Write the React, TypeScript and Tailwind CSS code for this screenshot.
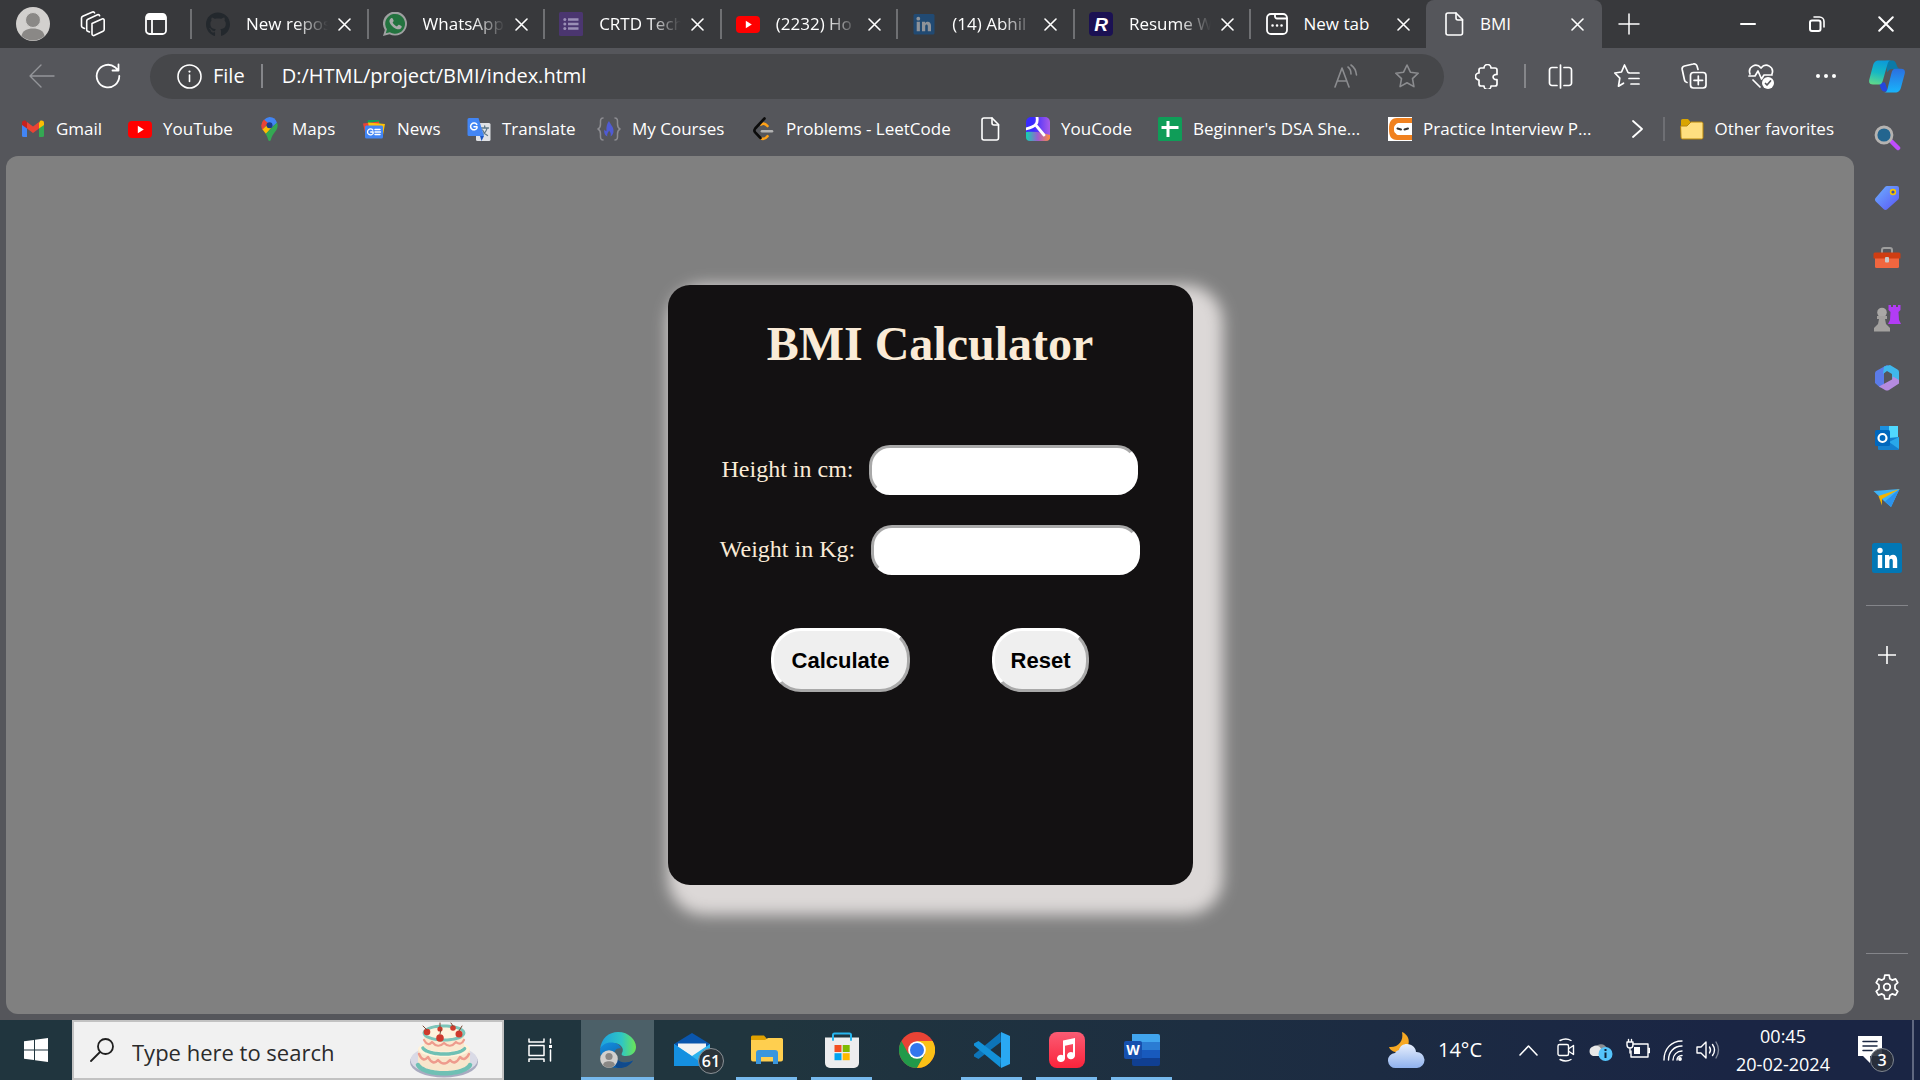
import React from "react";
import { FaGithub } from "react-icons/fa";

type Kids = { children?: React.ReactNode };
type SvgProps = Kids & { size?: number; w?: number; h?: number; box?: string; line?: boolean; sw?: number };

function Svg({ size = 24, w, h, box = "0 0 24 24", line, sw = 1.4, children }: SvgProps) {
  return (
    <svg
      width={w ?? size}
      height={h ?? size}
      viewBox={box}
      fill={line ? "none" : "currentColor"}
      stroke={line ? "currentColor" : "none"}
      strokeWidth={line ? sw : undefined}
      strokeLinecap="round"
      strokeLinejoin="round"
      className="shrink-0"
      aria-hidden="true"
    >
      {children}
    </svg>
  );
}

/* ---------- small icons ---------- */

const Cross = ({ size = 13 }: { size?: number }) => (
  <Svg size={size} box="0 0 13 13" line sw={1.6}>
    <path d="M1 1l11 11M12 1L1 12" />
  </Svg>
);

const PageIcon = () => (
  <Svg w={20} h={24} box="0 0 20 24" line sw={1.6}>
    <path d="M4 1h8l6.500 6.500V21a2 2 0 0 1-2 2H4a2 2 0 0 1-2-2V3a2 2 0 0 1 2-2z" />
    <path d="M12 1v5a2 2 0 0 0 2 2h4.500" />
  </Svg>
);

const YouTube = () => (
  <Svg>
    <rect x="0" y="4" width="24" height="17" rx="4" fill="#f00" />
    <path d="M9.800 8.800v7.400l6-3.700z" fill="#fff" />
  </Svg>
);

const WhatsApp = () => (
  <Svg>
    <path d="M0 24l1.800-6A12 12 0 1 1 6.500 22.300z" fill="#9fa0a1" />
    <path d="M2.800 21.200l1.100-3.900a9.900 9.900 0 1 1 3 2.900z" fill="#23733f" />
    <path d="M8 6.200c.7-.5 1.400-.3 1.700.4l.9 2c.2.500 0 .9-1 2 .9 1.800 2.400 3.100 4.300 3.800l1.400-1.500c.2-.2.600-.2.900-.1l2.200 1.100c.5.3.4 1-.1 2-1 1.600-3.200 1.800-5.500.8-3-1.300-5.500-4-6.300-6.700C6.200 8.400 6.900 7 8 6.200z" fill="#a9aaab" />
  </Svg>
);

const LinkedInDim = () => (
  <Svg>
    <rect x="1.500" y="2" width="21" height="20.500" rx="1.500" fill="#214a73" />
    <g fill="#8f9399">
      <circle cx="6.300" cy="6.700" r="1.900" />
      <path d="M4.700 9.800h3.200v9.400H4.700zM10 9.800h3v1.300c1.900-2.400 6-1.900 6 2.400v5.700h-3.200v-5c0-2.200-2.600-2-2.600 0v5H10z" />
    </g>
  </Svg>
);

const Avatar = ({ size = 34 }: { size?: number }) => (
  <Svg size={size} box="0 0 34 34">
    <circle cx="17" cy="17" r="17" fill="#d2d0ce" />
    <path d="M5.500 29C6.500 23.500 11 21.500 17 21.500S27.500 23.500 28.500 29A17 17 0 0 1 5.500 29z" fill="#8a8886" />
    <circle cx="17" cy="13" r="7.500" fill="#8a8886" stroke="#d2d0ce" />
  </Svg>
);

const Workspaces = () => (
  <Svg w={26} h={26} box="0 0 26 26" line sw={1.6}>
    <path d="M12 12.500l10-4.500a1.500 1.500 0 0 1 2.200 1.300v9.200a2 2 0 0 1-1.200 1.800l-8.500 4a1.600 1.600 0 0 1-2.500-1.300z" />
    <path d="M9.500 21l-1.800-.8a1.600 1.600 0 0 1-1-1.500V10a2 2 0 0 1 1.200-1.800l9.600-4.400a1.500 1.500 0 0 1 2.100 1" />
    <path d="M4.500 17.500l-2-1a1.600 1.600 0 0 1-1-1.500V7a2 2 0 0 1 1.200-1.800l9.800-4.200a1.500 1.500 0 0 1 2 .8" />
  </Svg>
);

const TabActions = () => (
  <Svg w={22} h={22} box="0 0 22 22" line sw={1.800}>
    <rect x="1" y="1" width="20" height="20" rx="3.500" />
    <path d="M2 2.500h18v3.500H2z" fill="currentColor" />
    <path d="M7 7v14" />
  </Svg>
);

const FormsIcon = () => (
  <Svg>
    <rect width="24" height="24" rx="1.500" fill="#4b3670" />
    <g fill="#9a8fb5">
      <circle cx="5.800" cy="7.500" r="1.500" /><circle cx="5.800" cy="12" r="1.500" /><circle cx="5.800" cy="16.500" r="1.500" />
      <path d="M9 6.300h10.500v2.400H9zM9 10.800h10.500v2.400H9zM9 15.300h10.500v2.400H9z" />
    </g>
  </Svg>
);

const ResumeIcon = () => (
  <Svg>
    <rect width="24" height="24" rx="4" fill="#1b1153" />
    <text x="12" y="19" textAnchor="middle" fontFamily="Liberation Sans" fontStyle="italic" fontWeight="700" fontSize="19" fill="#fff">R</text>
  </Svg>
);

const NewTabIcon = () => (
  <Svg w={22} h={22} box="0 0 22 22" line sw={1.800}>
    <rect x="1" y="1" width="20" height="20" rx="4" />
    <path d="M9 1v2.500a2 2 0 0 0 2 2h10" />
    <path d="M6.500 12.500h.1M11 12.500h.1M15.500 12.500h.1" strokeWidth="2.500" />
  </Svg>
);

/* ---------- favourites ---------- */

const Gmail = () => (
  <Svg w={22} h={24} box="0 0 22 24">
    <path d="M0 6.500V18.500a1.500 1.500 0 0 0 1.500 1.500H5V10z" fill="#4285f4" />
    <path d="M22 6.500V18.500a1.500 1.500 0 0 1-1.500 1.500H17V10z" fill="#34a853" />
    <path d="M17 6v5.500L22 8V6c0-2.500-2.500-3-4-2z" fill="#fbbc04" />
    <path d="M5 6v5.500L0 8V6c0-2.500 2.500-3 4-2z" fill="#c5221f" />
    <path d="M5 5l6 4.500L17 5v6.500L11 16l-6-4.500z" fill="#ea4335" />
  </Svg>
);

const Maps = () => (
  <Svg w={17} h={24} box="0 0 17 24">
    <path d="M8.500 0A8 8 0 0 1 16 6L8.500 12 3 3A8 8 0 0 1 8.500 0z" fill="#4285f4" />
    <path d="M3 2.500L7 6l-5.500 7A9 9 0 0 1 3 2.500z" fill="#ea4335" />
    <path d="M1.500 12.500L6 8l4 3-5 6z" fill="#fbbc04" />
    <path d="M16 5.500c2 5-1 8-3.500 11.500-1.500 2.200-2 4-2.800 6.200-.4 1-2 1-2.400 0-.6-2-1-4-2.800-6.200z" fill="#34a853" />
    <circle cx="8.500" cy="8.300" r="3" fill="#1a3c8b" />
  </Svg>
);

const NewsIcon = () => (
  <Svg>
    <path d="M6 3h11l2 5H5z" fill="#0c9d58" />
    <path d="M1 6.500l16-2 1 8-15 3z" fill="#ea4335" />
    <path d="M6 5.500l17 1.500-2 11-13-2z" fill="#ffc107" />
    <rect x="3" y="8.500" width="18" height="13" rx="1.500" fill="#4285f4" />
    <path d="M11 15H8.700M10.800 13a3 3 0 1 0 .3 3.500V15" fill="none" stroke="#fff" strokeWidth="1.300" />
    <path d="M13 12.500h5M13 15h5.500M13 17.500h5" stroke="#fff" strokeWidth="1.400" />
  </Svg>
);

const Translate = () => (
  <Svg>
    <rect x="9" y="6" width="14.500" height="18" rx="1.500" fill="#dfe1e5" />
    <path d="M14 11h7.500M17.700 9v2M20 11c-.5 3-3 6-5.500 7.500M15.500 13c1 2.500 3 4.500 5 5.500" fill="none" stroke="#607988" strokeWidth="1.300" />
    <path d="M13 19h4l-2.500 5z" fill="#1a56c4" />
    <path d="M2 1h9.500L17 19H2a1.500 1.500 0 0 1-1.500-1.500v-15A1.500 1.500 0 0 1 2 1z" fill="#4285f4" />
    <path d="M9.800 7.500A3.400 3.400 0 1 0 10 11V9.800H7" fill="none" stroke="#fff" strokeWidth="1.500" />
  </Svg>
);

const Courses = () => (
  <Svg>
    <path d="M6 1C3 1 3.500 4 3.500 7S3 11 1 12c2 1 2.500 2 2.500 5S3 23 6 23M18 1c3 0 2.500 3 2.500 6s.5 4 2.500 5c-2 1-2.500 2-2.500 5s.5 6-2.500 6" fill="none" stroke="#8d8d92" strokeWidth="1.500" />
    <path d="M12 4c1 3 4 5 4.500 9 .3 3-1 5.500-3 6.500.8-2 .2-4-1.500-6-.5 2-2.500 3.500-1.500 6-2.500-1-4-4-3-7 .7 1 1.200 1.500 2 1.700C9 10 10 6.500 12 4z" fill="#4f5bd5" />
  </Svg>
);

const LeetCode = () => (
  <Svg w={23} h={24} box="0 0 23 24" line sw={2.600}>
    <path d="M9 7.500q3-2.500 6.500 1.500" stroke="#ffa116" />
    <path d="M8.500 21q3.500 2.500 7-1.800" stroke="#ffa116" />
    <path d="M12.500 1.500L3.200 11.500c-1 1.200-1 2.700 0 3.900L8.500 21" stroke="#0b0b0b" />
    <path d="M10 14.300h10" stroke="#b3b3b3" />
  </Svg>
);

const YouCode = () => (
  <Svg>
    <defs>
      <linearGradient id="yc1" x1="0" y1="0" x2="1" y2="0"><stop offset="0.300" stopColor="#3a2bff" /><stop offset="1" stopColor="#a95be8" /></linearGradient>
      <linearGradient id="yc2" x1="0" y1="0" x2="1" y2="0"><stop offset="0" stopColor="#10d5b0" /><stop offset="0.500" stopColor="#a05bd0" /><stop offset="1" stopColor="#ff8a3c" /></linearGradient>
    </defs>
    <rect width="24" height="24" rx="5" fill="url(#yc1)" />
    <path d="M0 15c8-1 16 0 24 3v2a4 4 0 0 1-4 4H4a4 4 0 0 1-4-4z" fill="url(#yc2)" />
    <path d="M11 0c1 6 0 9-11 12M10.500 9l7.500 9" fill="none" stroke="#fff" strokeWidth="2.800" strokeLinecap="round" />
  </Svg>
);

const SheetIcon = () => (
  <Svg><rect width="24" height="24" rx="1.500" fill="#0f9d58" /><path d="M8.500 4h3v16h-3zM3.500 9h17v3h-17z" fill="#fff" /></Svg>
);

const NinjaIcon = () => (
  <Svg>
    <rect width="24" height="24" fill="#fff" />
    <path d="M24 1H9C3 1 1 5 1 12s2 11 8 11h15v-5H11c-3 0-4-2-4-6s1-6 4-6h13z" fill="#f0811f" />
    <rect x="6" y="7.500" width="18" height="9" rx="3.500" fill="#fff" />
    <path d="M9.500 11.500l3.500 1M20 11.500l-3.500 1" stroke="#333" strokeWidth="2" />
  </Svg>
);

const Folder = () => (
  <Svg>
    <path d="M1 6V3.500A1.500 1.500 0 0 1 2.500 2H8l3 3.500V9H1z" fill="#d9a400" />
    <path d="M1 9h6l4-4h10.500A1.500 1.500 0 0 1 23 6.500v14A1.500 1.500 0 0 1 21.500 22h-19A1.500 1.500 0 0 1 1 20.500z" fill="#ffdf80" stroke="#b8860b" strokeWidth="1" />
  </Svg>
);

/* ---------- tab strip ---------- */

const tabs: { icon: React.ReactNode; label: string; fade: boolean }[] = [
  { icon: <FaGithub size={25} color="#23282d" />, label: "New repos", fade: true },
  { icon: <WhatsApp />, label: "WhatsApp", fade: true },
  { icon: <FormsIcon />, label: "CRTD Tech", fade: true },
  { icon: <YouTube />, label: "(2232) Ho", fade: true },
  { icon: <LinkedInDim />, label: "(14) Abhil", fade: true },
  { icon: <ResumeIcon />, label: "Resume W", fade: true },
  { icon: <NewTabIcon />, label: "New tab", fade: false },
];

function TabStrip() {
  return (
    <header className="flex h-12 bg-[#38393c] text-[17px]">
      <div className="flex w-[190px] shrink-0 items-center pl-4">
        <button aria-label="Profile" className="mr-[30px]"><Avatar /></button>
        <button aria-label="Workspaces" className="mr-[39px]"><Workspaces /></button>
        <button aria-label="Tab actions"><TabActions /></button>
      </div>
      <div className="flex max-w-[1236px] min-w-0 flex-1">
        {tabs.map((t) => (
          <div key={t.label} className="flex min-w-0 flex-1 items-center">
            <span className="h-[30px] w-0.5 shrink-0 bg-[#6f7073]" />
            <span className="ml-3.5 flex w-6 shrink-0 justify-center">{t.icon}</span>
            <span
              className={
                t.fade
                  ? "ml-4 w-[82px] whitespace-nowrap [mask-image:linear-gradient(to_right,black_60%,transparent)]"
                  : "ml-3.5 w-[84px] whitespace-nowrap"
              }
            >
              {t.label}
            </span>
            <button aria-label="Close tab" className="ml-2.5"><Cross /></button>
          </div>
        ))}
      </div>
      <div className="flex w-[176px] shrink-0 items-center rounded-t-lg bg-[#55565b] pl-[18px]">
        <PageIcon />
        <span className="ml-4 flex-1">BMI</span>
        <button aria-label="Close tab" className="mr-[18px]"><Cross /></button>
      </div>
      <button aria-label="New tab" className="ml-4">
        <Svg size={22} box="0 0 22 22" line sw={1.500}><path d="M11 1v20M1 11h20" /></Svg>
      </button>
      <div className="ml-auto flex items-center">
        <button aria-label="Minimize" className="flex w-[69px] justify-center"><Svg size={16} box="0 0 16 16" line sw={2}><path d="M1 8h14" /></Svg></button>
        <button aria-label="Restore" className="flex w-[69px] justify-center">
          <Svg size={16} box="0 0 16 16" line sw={2}><rect x="1" y="4.500" width="10.500" height="10.500" rx="2" /><path d="M5 1h5.500A4.500 4.500 0 0 1 15 5.500V11" strokeWidth="1.600" /></Svg>
        </button>
        <button aria-label="Close" className="flex w-[69px] justify-center"><Cross size={16} /></button>
      </div>
    </header>
  );
}

/* ---------- toolbar ---------- */

const STAR = "M13 2l3.400 7.200 7.800 1-5.700 5.500 1.400 7.900L13 19.800l-6.900 3.800 1.400-7.900L1.800 10.200l7.800-1z";

const Copilot = () => (
  <Svg w={36} h={33} box="0 0 36 33">
    <defs>
      <linearGradient id="cp1" x1="0.500" y1="0" x2="0.300" y2="1"><stop offset="0" stopColor="#0c9bd8" /><stop offset="0.500" stopColor="#16b8c4" /><stop offset="1" stopColor="#5fd98b" /></linearGradient>
      <linearGradient id="cp2" x1="0.500" y1="0" x2="0.500" y2="1"><stop offset="0" stopColor="#2b6fe0" /><stop offset="1" stopColor="#18b4fb" /></linearGradient>
    </defs>
    <path d="M17 .5h6c3 0 4 2 5 5.500.5 1.600 1.500 2.500 3 2.700l-10 .5-3 3z" fill="#0a7aa8" />
    <path d="M8 22.500h8l3 9h-3c-3 0-4-2-5-5.500-.5-2-1-3-3-3.500z" fill="#2447dd" />
    <path d="M10 .5h12c-2 0-3 1.500-3.600 4L14 20c-.7 2.500-1.500 4.500-4 4.500H4c-3 0-4.500-1.500-3.700-5L4 5.500C5 2 6.500.5 10 .5z" fill="url(#cp1)" />
    <path d="M26 32.500H15c2 0 3-1.500 3.600-4L22.500 13c.7-2.500 1.500-4.200 4-4.200H32c3 0 4.500 1.500 3.700 5L32 27.500c-1 3.500-2.500 5-6 5z" fill="url(#cp2)" />
  </Svg>
);

function Toolbar() {
  return (
    <div className="flex h-14 items-center pr-[15px] text-[20px]">
      <button aria-label="Back" className="ml-[29px] text-[#94959a]">
        <Svg size={26} box="0 0 26 26" line><path d="M1 13h24M12 2L1 13l11 11" /></Svg>
      </button>
      <button aria-label="Refresh" className="ml-10">
        <Svg size={26} box="0 0 26 26" line sw={1.800}><path d="M24.300 13A11.300 11.300 0 1 1 20 4.200L23.500 7.500M23.500 1.500v6h-6" /></Svg>
      </button>
      <div className="ml-[29px] flex h-[45px] min-w-0 flex-1 items-center rounded-full bg-[#46474a] pl-[27px] pr-6">
        <Svg size={25} box="0 0 25 25" line sw={1.600}><circle cx="12.500" cy="12.500" r="11.500" /><path d="M12.500 11v6.500" /><path d="M12.500 7.500v.1" strokeWidth="2.200" /></Svg>
        <label htmlFor="address" className="ml-[11px]">File</label>
        <span className="ml-4 h-6 w-0.5 bg-[#85868a]" />
        <input id="address" type="text" defaultValue="D:/HTML/project/BMI/index.html" className="ml-[19px] min-w-0 flex-1 bg-transparent outline-none" />
        <div className="flex gap-9 text-[#8b8c8f]">
          <button aria-label="Read aloud">
            <Svg size={24} box="0 0 24 24" line sw={1.600}><path d="M1 23L8 4l7 19M3.500 17h9.200M14 3c2 1.500 3 4 3 7M17 1c3 2 5 5.500 5.500 10" /></Svg>
          </button>
          <button aria-label="Add to favorites"><Svg size={26} box="0 0 26 26" line sw={1.600}><path d={STAR} /></Svg></button>
        </div>
      </div>
      <button aria-label="Extensions" className="ml-[31px]">
        <Svg size={25} box="0 0 25 25" line sw={1.700}><path d="M9 4a3.500 3.500 0 0 1 7 0h4a2 2 0 0 1 2 2v4.500c-5-.5-5.500 5.500 0 5V20a2 2 0 0 1-2 2h-4a3.500 3.500 0 0 1-7 0H6a2 2 0 0 1-2-2v-4a3.500 3.500 0 0 1 0-7V6a2 2 0 0 1 2-2z" /></Svg>
      </button>
      <span className="ml-6 h-6 w-0.5 bg-[#85868a]" />
      <div className="ml-[22px] flex items-center gap-[41px]">
        <button aria-label="Split screen">
          <Svg size={25} box="0 0 25 25" line sw={1.700}><path d="M9 3.500H4A2.500 2.500 0 0 0 1.500 6v13A2.500 2.500 0 0 0 4 21.500h5M16 3.500h5A2.500 2.500 0 0 1 23.500 6v13a2.500 2.500 0 0 1-2.500 2.500h-5M12.500 1v23" /></Svg>
        </button>
        <button aria-label="Favorites">
          <Svg size={26} box="0 0 26 26" line sw={1.700}><path d="M16 10l-2-.5L10.500 2 7.500 9l-6.700 1 5 5.200-1.300 8 5-3M17 10h8M15 15.500h10M17 21h8M16 10h-1" /></Svg>
        </button>
        <button aria-label="Collections">
          <Svg size={26} box="0 0 26 26" line sw={1.700}><rect x="9.500" y="9.500" width="15.500" height="15.500" rx="3" /><path d="M17.300 13v8.600M13 17.300h8.600M6 19.500a3 3 0 0 1-2.500-2.500L1.200 6.500A3 3 0 0 1 3.500 3l8.700-2A3 3 0 0 1 16 3l1 3.500" /></Svg>
        </button>
        <button aria-label="Browser essentials">
          <Svg size={26} box="0 0 26 26" line sw={1.700}>
            <path d="M2 11C-.5 4 8-1 13 5c5-6 13.500-1 11 6M1 13h6l3-5 3.500 8 2.500-4h8M5 17l7 7" />
            <circle cx="20" cy="20" r="6" fill="#fff" stroke="none" /><path d="M17.500 20.500l1.500 1.500 3.500-4" stroke="#55565b" />
          </Svg>
        </button>
        <button aria-label="More"><Svg w={22} h={6} box="0 0 22 6"><circle cx="3" cy="3" r="2" /><circle cx="11" cy="3" r="2" /><circle cx="19" cy="3" r="2" /></Svg></button>
      </div>
      <button aria-label="Copilot" className="ml-8"><Copilot /></button>
    </div>
  );
}

/* ---------- favourites bar ---------- */

const favorites: { icon: React.ReactNode; label: string; width: string }[] = [
  { icon: <Gmail />, label: "Gmail", width: "w-[107px]" },
  { icon: <YouTube />, label: "YouTube", width: "w-[129px]" },
  { icon: <Maps />, label: "Maps", width: "w-[105px]" },
  { icon: <NewsIcon />, label: "News", width: "w-[105px]" },
  { icon: <Translate />, label: "Translate", width: "w-[130px]" },
  { icon: <Courses />, label: "My Courses", width: "w-[154px]" },
  { icon: <LeetCode />, label: "Problems - LeetCode", width: "w-[227px]" },
  { icon: <PageIcon />, label: "", width: "w-[48px]" },
  { icon: <YouCode />, label: "YouCode", width: "w-[132px]" },
  { icon: <SheetIcon />, label: "Beginner's DSA She...", width: "w-[230px]" },
  { icon: <NinjaIcon />, label: "Practice Interview P...", width: "w-[210px]" },
];

function FavoritesBar() {
  return (
    <nav className="flex h-[52px] items-center pr-5 pb-0.5 pl-[21px] text-[17px]">
      {favorites.map((f, i) => (
        <a key={i} href="#" aria-label={f.label || "Page"} className={`flex shrink-0 items-center whitespace-nowrap ${f.width}`}>
          <span className="flex w-6 justify-center">{f.icon}</span>
          {f.label && <span className="ml-[11px]">{f.label}</span>}
        </a>
      ))}
      <div className="ml-auto flex items-center">
        <button aria-label="More favorites" className="mr-5"><Svg w={11} h={18} box="0 0 11 18" line sw={1.800}><path d="M1 1l9 8-9 8" /></Svg></button>
        <span className="mr-[15px] h-6 w-0.5 bg-[#6e6f74]" />
        <a href="#" className="flex items-center gap-[11px] whitespace-nowrap"><Folder />Other favorites</a>
      </div>
    </nav>
  );
}

/* ---------- sidebar ---------- */

const sidebarIcons: { name: string; icon: React.ReactNode }[] = [
  {
    name: "Search",
    icon: (
      <Svg size={28} box="0 0 28 28">
        <path d="M19 18l6 6" stroke="#c04dff" strokeWidth="4.500" strokeLinecap="round" />
        <circle cx="11" cy="11" r="8" fill="#23658f" stroke="#b5b3b1" strokeWidth="2.800" />
      </Svg>
    ),
  },
  {
    name: "Shopping",
    icon: (
      <Svg size={28} box="0 0 28 28">
        <defs><linearGradient id="tag" x1="0" y1="0" x2="1" y2="1"><stop offset="0" stopColor="#6cb0ff" /><stop offset="1" stopColor="#5a55f5" /></linearGradient></defs>
        <path d="M14 2h10a2 2 0 0 1 2 2v9.500a3 3 0 0 1-.8 2L14.500 25a3 3 0 0 1-4 0L3 17.800a3 3 0 0 1 0-4.200L12 3a3 3 0 0 1 2-1z" fill="url(#tag)" />
        <circle cx="20" cy="8" r="2.400" fill="#3b4cab" stroke="#f5c400" strokeWidth="1.600" />
      </Svg>
    ),
  },
  {
    name: "Tools",
    icon: (
      <Svg size={28} box="0 0 28 28">
        <path d="M9 9V6a2 2 0 0 1 2-2h6a2 2 0 0 1 2 2v3" fill="none" stroke="#9e9e9e" strokeWidth="2" />
        <path d="M2 13h24v9.500a1.500 1.500 0 0 1-1.500 1.500h-21A1.500 1.500 0 0 1 2 22.500z" fill="#f0663f" />
        <path d="M2 8.500h24A1.500 1.500 0 0 1 27.500 10v4.500H.5V10A1.500 1.500 0 0 1 2 8.500z" fill="#cf3d12" />
        <rect x="12" y="13" width="4" height="5.500" rx="1" fill="#c9c9c9" />
      </Svg>
    ),
  },
  {
    name: "Games",
    icon: (
      <Svg size={28} box="0 0 28 28">
        <path d="M15.500 1h2.500v2h2V1h3v2h2V1h2.500v5l-2 2 .5 8 2 4h-13l2-4 .5-8-2-2z" fill="#b23cf5" />
        <circle cx="9" cy="8.500" r="4.800" fill="#aaa8a6" />
        <path d="M4 12h10v3h-2l1 5 4 4v3.500H1V24l4-4 1-5H4z" fill="#a3a19f" />
      </Svg>
    ),
  },
  {
    name: "Microsoft 365",
    icon: (
      <Svg size={28} box="0 0 28 28">
        <path d="M14 1L4 6.500A3 3 0 0 0 2 9v10l5 4.500 4-2V9l6-6z" fill="#5b7be8" />
        <path d="M11 2.500L17 1l7.500 4.500A3 3 0 0 1 26 8v11l-7-4.500V10l-5-3-4 3z" fill="#3fb7ec" />
        <path d="M26 16v3.500L16 26a4 4 0 0 1-4 0l-6-3.500 13-7 1-3z" fill="#b58be0" />
      </Svg>
    ),
  },
  {
    name: "Outlook",
    icon: (
      <Svg size={28} box="0 0 28 28">
        <path d="M7 2h17a1 1 0 0 1 1 1v12H7z" fill="#1b90e0" /><path d="M16 2h9v12h-9z" fill="#50d9ff" />
        <path d="M5 15l21-2v12a1 1 0 0 1-1 1H6a1 1 0 0 1-1-1z" fill="#1380cf" /><path d="M26 13v12L16 18z" fill="#28a8ea" />
        <rect x="2" y="6" width="15" height="16" rx="1.500" fill="#0067bd" />
        <circle cx="9.500" cy="14" r="4" fill="none" stroke="#fff" strokeWidth="2.200" />
      </Svg>
    ),
  },
  {
    name: "Drop",
    icon: (
      <Svg size={28} box="0 0 28 28">
        <path d="M.5 7L26.500 5 18 23l-7-6z" fill="#3fb3f6" />
        <path d="M26.500 5L18 23l-6-5.500z" fill="#2b93ee" />
        <path d="M26.500 5L9 15v6.500L5.500 12z" fill="#f5b400" />
      </Svg>
    ),
  },
  {
    name: "LinkedIn",
    icon: (
      <Svg size={30} box="0 0 30 30">
        <rect width="30" height="30" rx="2.500" fill="#0277b5" />
        <g fill="#fff"><circle cx="8" cy="7.500" r="2.700" /><path d="M5.800 12h4.400v13H5.800zM13 12h4.200v1.800c2.500-3.400 8-2.600 8 3.200v8h-4.400v-7c0-3-3.400-2.800-3.400 0v7H13z" /></g>
      </Svg>
    ),
  },
];

function Sidebar() {
  return (
    <aside className="flex w-[66px] shrink-0 flex-col items-center pt-1 pb-5">
      <div className="flex flex-col">
        {sidebarIcons.map((s) => (
          <button key={s.name} aria-label={s.name} className="flex h-[60px] items-center justify-center">{s.icon}</button>
        ))}
      </div>
      <span className="mt-[17px] h-px w-[42px] bg-[#84858a]" />
      <button aria-label="Customize" className="mt-10"><Svg size={18} box="0 0 18 18" line sw={1.600}><path d="M9 0v18M0 9h18" /></Svg></button>
      <span className="mt-auto h-px w-[42px] bg-[#84858a]" />
      <button aria-label="Settings" className="mt-5">
        <Svg size={26} box="0 0 26 26" line sw={1.700}>
          <circle cx="13" cy="13" r="3.300" />
          <path d="M10.800 1.200h4.400l.7 3.600 2.200 1.300 3.500-1.200 2.200 3.800-2.800 2.500v3.600l2.800 2.500-2.200 3.800-3.500-1.200-2.200 1.300-.7 3.600h-4.400l-.7-3.600-2.200-1.300-3.500 1.200-2.200-3.800L5 14.800v-3.600L2.200 8.700l2.200-3.800 3.500 1.200 2.200-1.300z" />
        </Svg>
      </button>
    </aside>
  );
}

/* ---------- calculator ---------- */

const fieldClass =
  "h-[50px] w-[269px] rounded-[21px] border-3 border-t-[#a9a9a9] border-l-[#a9a9a9] border-r-white border-b-white bg-white px-4 text-black outline-none";
const buttonClass =
  "h-16 rounded-[30px] border-3 border-t-white border-l-white border-r-[#a9a9a9] border-b-[#a9a9a9] bg-[#efefef] font-['Liberation_Sans',sans-serif] text-[22px] font-bold text-black";

function Calculator() {
  return (
    <form className="flex h-[600px] w-[525px] flex-col rounded-[22px] bg-[#131112] pt-[31px] font-['Liberation_Serif',serif] text-[24px] text-[#faebd7] shadow-[15px_15px_15px_15px_#dcd8d7]">
      <h1 className="text-center text-[48px] leading-[56px] font-bold">BMI Calculator</h1>
      <div className="mt-[73px] flex items-center justify-center gap-4">
        <label htmlFor="height" className="pb-0.5">Height in cm:</label>
        <input id="height" type="text" className={fieldClass} />
      </div>
      <div className="mt-[30px] flex items-center justify-center gap-4">
        <label htmlFor="weight" className="pb-0.5">Weight in Kg:</label>
        <input id="weight" type="text" className={fieldClass} />
      </div>
      <div className="mt-[53px] flex justify-center gap-[82px]">
        <button type="button" className={`w-[139px] ${buttonClass}`}>Calculate</button>
        <button type="reset" className={`w-[97px] ${buttonClass}`}>Reset</button>
      </div>
    </form>
  );
}

/* ---------- taskbar ---------- */

const Cake = () => (
  <Svg w={68} h={56} box="0 0 68 56">
    <ellipse cx="34" cy="40" rx="34" ry="15.500" fill="#a9abc0" />
    <ellipse cx="34" cy="38" rx="33.500" ry="14.500" fill="#d9dae6" />
    <path d="M8 27v16c6 12 46 12 52 0V27z" fill="#f8e6cc" />
    <ellipse cx="34" cy="27" rx="26" ry="8" fill="#fff3dc" />
    <path d="M8 43c6 11 46 11 52 0" fill="none" stroke="#6fc0b4" strokeWidth="4.500" strokeDasharray="4 1" />
    <path d="M9 32q4 9 9 3 5 9 10 3 6 7 12 0 5 6 10-3 5 5 9-3" fill="none" stroke="#ee9b8d" strokeWidth="2.500" />
    <path d="M13 26c5 8 37 8 42 0" fill="none" stroke="#6fc0b4" strokeWidth="3.500" strokeDasharray="4 1" />
    <path d="M14 11v14c5 6 35 6 40 0V11z" fill="#fbe9d0" />
    <path d="M14 18q4 7 8 2 6 7 12 1 6 6 12-1 5 4 8-2" fill="none" stroke="#ee9b8d" strokeWidth="2.200" />
    <ellipse cx="34" cy="11" rx="20" ry="7" fill="#fff3dc" stroke="#7cc5ba" strokeWidth="3" strokeDasharray="4 1" />
    <g fill="#cf3a2c"><circle cx="17" cy="10" r="3.300" /><circle cx="30" cy="16" r="3.800" /><circle cx="49" cy="12" r="3.500" /><circle cx="30" cy="7" r="2.600" /><circle cx="43" cy="6" r="2.800" /></g>
    <path d="M17 8l-4-4M30 12l1-5M49 9l3-5M30 5V1M43 4l-2-3" stroke="#7b4a35" fill="none" />
  </Svg>
);

const Edge = () => (
  <Svg size={36} box="0 0 36 36">
    <defs>
      <linearGradient id="eg1" x1="0" y1="0.500" x2="1" y2="0.500"><stop offset="0" stopColor="#1c9fe0" /><stop offset="0.600" stopColor="#2fc6c4" /><stop offset="1" stopColor="#6ce655" /></linearGradient>
      <linearGradient id="eg2" x1="0" y1="0" x2="0.600" y2="1"><stop offset="0" stopColor="#1490df" /><stop offset="1" stopColor="#0c59a4" /></linearGradient>
    </defs>
    <path d="M0 18C1 6 9 0 18 0c11 0 18 8 18 15 0 6-5 9-10 9-4 0-5-1-4-3 3-5-2-10-9-10C6 11 1 14 0 18z" fill="url(#eg1)" />
    <path d="M0 18c1-5 6-7.500 11-7.500 5 0 9 2 10 6-9-2-10 14 3 14 4 0 7-1 9-2-3 5-9 7.500-15 7.500C7 36 0 28 0 18z" fill="url(#eg2)" />
    <path d="M15 20c-1 8 8 14 18 8.500-3 5-8 7.500-14 7.500-6-1-9-12-4-16z" fill="#104a8c" />
    <g transform="translate(0 18)"><circle cx="9" cy="9" r="8.800" fill="#d2d0ce" /><circle cx="9" cy="6.500" r="3.600" fill="#8a8886" /><path d="M3 15.300C3.500 12 6 11.200 9 11.200s5.500.8 6 4.100a8.800 8.800 0 0 1-12 0z" fill="#8a8886" /></g>
  </Svg>
);

const Mail = () => (
  <Svg size={36} box="0 0 36 36">
    <path d="M0 12L18 1l18 11v8H0z" fill="#0a56ad" />
    <path d="M4 11.500h28V20L18 26 4 20z" fill="#f3f3f3" />
    <path d="M0 12l18 12 18-12v20a2 2 0 0 1-2 2H2a2 2 0 0 1-2-2z" fill="#2cb4ee" />
    <path d="M0 34V12l27 18.500L30 34z" fill="#1590e0" />
  </Svg>
);

const Explorer = () => (
  <Svg w={32} h={30} box="0 0 32 30">
    <path d="M0 2a1.500 1.500 0 0 1 1.500-1.500H13L16 4v5H0z" fill="#e0a100" />
    <path d="M0 5h14l3-2h13.500A1.500 1.500 0 0 1 32 4.500v20a2 2 0 0 1-2 2H2a2 2 0 0 1-2-2z" fill="#ffcf4f" />
    <path d="M5 29V18a3 3 0 0 1 3-3h16a3 3 0 0 1 3 3v11h-5v-7H10v7z" fill="#3a96dd" />
  </Svg>
);

const Store = () => (
  <Svg size={36} box="0 0 36 36">
    <path d="M1 5.500h34V31a5 5 0 0 1-5 5H6a5 5 0 0 1-5-5z" fill="#ededee" />
    <path d="M9 8V3a1.500 1.500 0 0 1 1.500-1.500h15A1.500 1.500 0 0 1 27 3v5" fill="none" stroke="#28b6ee" strokeWidth="2" />
    <path d="M10.500 13h7v7h-7z" fill="#f25022" /><path d="M18.700 13h7v7h-7z" fill="#7fba00" />
    <path d="M10.500 21.200h7v7h-7z" fill="#00a4ef" /><path d="M18.700 21.200h7v7h-7z" fill="#ffb900" />
  </Svg>
);

const Chrome = () => (
  <Svg size={36} box="0 0 36 36">
    <circle cx="18" cy="18" r="18" fill="#ea4335" />
    <path d="M2.400 9A18 18 0 0 0 18 36l8-14-8 4-9-5z" fill="#229a4a" />
    <path d="M18 36A18 18 0 0 0 33.600 9H18l8 13z" fill="#fbc116" />
    <circle cx="18" cy="18" r="8.800" fill="#fff" /><circle cx="18" cy="18" r="7" fill="#3377ee" />
  </Svg>
);

const Code = () => (
  <Svg size={36} box="0 0 36 36">
    <path d="M26.500.500L27 10 4.500 27 0 24.500v-2z" fill="#0d74b8" />
    <path d="M26.500 35.500L27 26 4.500 9 0 11.500v2z" fill="#1391d8" />
    <path d="M27 0l9 4v28l-9 4z" fill="#2aa8f2" />
  </Svg>
);

const Music = () => (
  <Svg size={36} box="0 0 36 36">
    <defs><linearGradient id="mus" x1="0" y1="0" x2="0" y2="1"><stop offset="0" stopColor="#fb5c74" /><stop offset="1" stopColor="#fa233b" /></linearGradient></defs>
    <rect width="36" height="36" rx="8" fill="url(#mus)" />
    <path d="M14 8.500L26 6v17.500a4 3.600 0 1 1-2-3V12l-8 1.800V26.500a4 3.600 0 1 1-2-3.200z" fill="#fff" />
  </Svg>
);

const Word = () => (
  <Svg size={36} box="0 0 36 36">
    <path d="M8 2h26a2 2 0 0 1 2 2v6H8z" fill="#41a5ee" /><path d="M8 10h28v8H8z" fill="#2b7cd3" />
    <path d="M8 18h28v8H8z" fill="#185abd" /><path d="M8 26h28v6a2 2 0 0 1-2 2H10a2 2 0 0 1-2-2z" fill="#103f91" />
    <rect y="9" width="18" height="18" rx="2" fill="#1650ae" />
    <text x="9" y="23" textAnchor="middle" fontFamily="Open Sans" fontWeight="700" fontSize="14" fill="#fff">W</text>
  </Svg>
);

const apps: { name: string; icon: React.ReactNode; open: boolean; badge?: string }[] = [
  { name: "Mail", icon: <Mail />, open: false, badge: "61" },
  { name: "File Explorer", icon: <Explorer />, open: true },
  { name: "Microsoft Store", icon: <Store />, open: true },
  { name: "Chrome", icon: <Chrome />, open: false },
  { name: "Visual Studio Code", icon: <Code />, open: true },
  { name: "Music", icon: <Music />, open: true },
  { name: "Word", icon: <Word />, open: true },
];

function Taskbar() {
  return (
    <footer className="flex h-[60px] bg-linear-to-r from-[#20353e] from-40% to-[#1a2544] to-90%">
      <button aria-label="Start" className="flex w-[72px] shrink-0 items-center justify-center">
        <Svg size={24} box="0 0 24 24"><path d="M0 3.300l10-1.400v9.600H0zM11 1.700L24 0v11.500H11zM0 12.500h10v9.600L0 20.700zM11 12.500h13V24l-13-1.800z" /></Svg>
      </button>
      <div className="flex w-[432px] items-center border-2 border-[#c2c2c2] bg-[#f1f1f1] pr-6 pl-4 text-[#1f1f1f]">
        <Svg size={24} box="0 0 24 24" line sw={1.800}><circle cx="15.500" cy="8.500" r="7.500" /><path d="M10 14L1 23" /></Svg>
        <input aria-label="Search" type="text" placeholder="Type here to search" className="ml-[18px] min-w-0 flex-1 bg-transparent pt-1 text-[22px] outline-none placeholder:text-[#2b2b2b]" />
        <Cake />
      </div>
      <button aria-label="Task view" className="flex w-[77px] shrink-0 items-center justify-center pr-1.5">
        <Svg size={24} box="0 0 24 24" line sw={1.500}><path d="M1 1v3h15V1M1 7.500h15v10H1zM1 24v-3h15v3M22.500 1v4M22.500 12v11" /><path d="M21 7h3v3h-3z" fill="currentColor" stroke="none" /></Svg>
      </button>
      <button aria-label="Edge" className="flex w-[73px] shrink-0 items-center justify-center border-b-3 border-[#76b9ed] bg-[#4c6068] pt-[3px]"><Edge /></button>
      {apps.map((a) => (
        <button key={a.name} aria-label={a.name} className="flex w-[75px] shrink-0 justify-center">
          <span className={a.open ? "relative flex h-full w-[61px] items-center justify-center border-b-3 border-[#76b9ed] pt-[3px]" : "relative flex h-full w-[61px] items-center justify-center"}>
            {a.icon}
            {a.badge && (
              <span className="absolute right-[-2px] bottom-1.5 flex h-[26px] w-[26px] items-center justify-center rounded-full border border-[#8b9196] bg-[#2b343a] text-[16px] font-semibold">{a.badge}</span>
            )}
          </span>
        </button>
      ))}
      <div className="ml-auto flex items-center">
        <button className="flex items-center gap-3 text-[20px]">
          <Svg w={38} h={38} box="0 0 38 38">
            <defs><linearGradient id="cl" x1="0" y1="0" x2="0" y2="1"><stop offset="0" stopColor="#e8effc" /><stop offset="1" stopColor="#8fb2ee" /></linearGradient></defs>
            <path d="M14 1c10 4 9 18-3 20-5 1-9-2-10-5 9 1 15-6 13-15z" fill="#f7a823" />
            <path d="M8 37a7.500 7.500 0 0 1-1-15 6 6 0 0 1 4-3c1-4 4-6 8-6 5 0 9 4 9 8a8 8 0 0 1 1 16z" fill="url(#cl)" />
          </Svg>
          14°C
        </button>
        <button aria-label="Show hidden icons" className="ml-[37px]"><Svg w={19} h={11} box="0 0 19 11" line sw={1.600}><path d="M1 10l8.500-9L18 10" /></Svg></button>
        <span className="ml-[19px] flex items-center gap-[13px]">
          <Svg w={18} h={24} box="0 0 18 24" line sw={1.400}><path d="M3 2.500Q9-.5 14 2.500M3 21.500q6 3 11 0" /><rect x="1" y="6.500" width="10.500" height="11" rx="1.500" /><path d="M12 10.500l4.500-3v9l-4.500-3" /></Svg>
          <Svg w={25} h={24} box="0 0 25 24">
            <path d="M7 9a7 6.500 0 0 1 12 1v6H9z" fill="#8d8f92" /><path d="M5 18a5 5 0 0 1 0-9.500 5.500 5.500 0 0 1 8 2L17 18z" fill="#e8e8e8" />
            <circle cx="17.500" cy="16" r="7" fill="#55c4fb" /><path d="M16.500 11h2v2h-2zM16.500 14.500h2V20h-2z" fill="#10243a" />
          </Svg>
          <Svg w={24} h={24} box="0 0 24 24" line sw={1.400}><path d="M7 6h15v13H5v-6M22 10.500h1.500v4H22" /><path d="M1 4h6v3a3 3 0 0 1-6 0zM2.500 1.500V4M5.500 1.500V4M4 10v5" /><path d="M8 9h6v7H8z" fill="currentColor" stroke="none" /></Svg>
          <Svg w={20} h={24} box="0 0 20 24" line sw={1.400}><path d="M1 22C1 11 8 3 19 3M5.500 22C5.500 14 11 8 19 8M10 22c0-5 4-9 9-9" /><path d="M14 22c0-2.500 2-4.500 5-4.500" /><circle cx="17" cy="21" r="1.200" fill="currentColor" /></Svg>
          <Svg w={24} h={24} box="0 0 24 24" line sw={1.400}><path d="M1 9h4l5-5v16l-5-5H1zM13.500 9q2 3 0 6M16.500 6.500q4 5.500 0 11" /><path d="M20 4q5 8 0 16" stroke="#7d8494" /></Svg>
        </span>
        <time className="ml-[15px] w-[96px] text-center text-[18px] leading-7 whitespace-nowrap">00:45<br />20-02-2024</time>
        <button aria-label="Notifications" className="relative ml-[27px] w-9">
          <Svg w={24} h={28} box="0 0 24 28"><path d="M0 0h24v20H12v7l-7-7H0z" fill="#fff" /><path d="M5 5.500h14M5 10h14M5 14.500h9" stroke="#1b2742" strokeWidth="1.500" /></Svg>
          <span className="absolute top-3 left-3 flex h-6 w-6 items-center justify-center rounded-full border border-[#7f8690] bg-[#2a303b]/90 text-[16px] font-semibold">3</span>
        </button>
        <span className="ml-[18px] mr-1.5 h-[60px] w-0.5 bg-[#5f6880]" />
      </div>
    </footer>
  );
}

export default function App() {
  return (
    <div className="flex min-h-screen flex-col overflow-hidden bg-[#55565b] font-['Open_Sans',sans-serif] text-white">
      <TabStrip />
      <Toolbar />
      <div className="flex flex-1">
        <div className="flex min-w-0 flex-1 flex-col">
          <FavoritesBar />
          <main className="mb-1.5 ml-1.5 flex flex-1 items-center justify-center rounded-xl bg-[#808080]">
            <Calculator />
          </main>
        </div>
        <Sidebar />
      </div>
      <Taskbar />
    </div>
  );
}
